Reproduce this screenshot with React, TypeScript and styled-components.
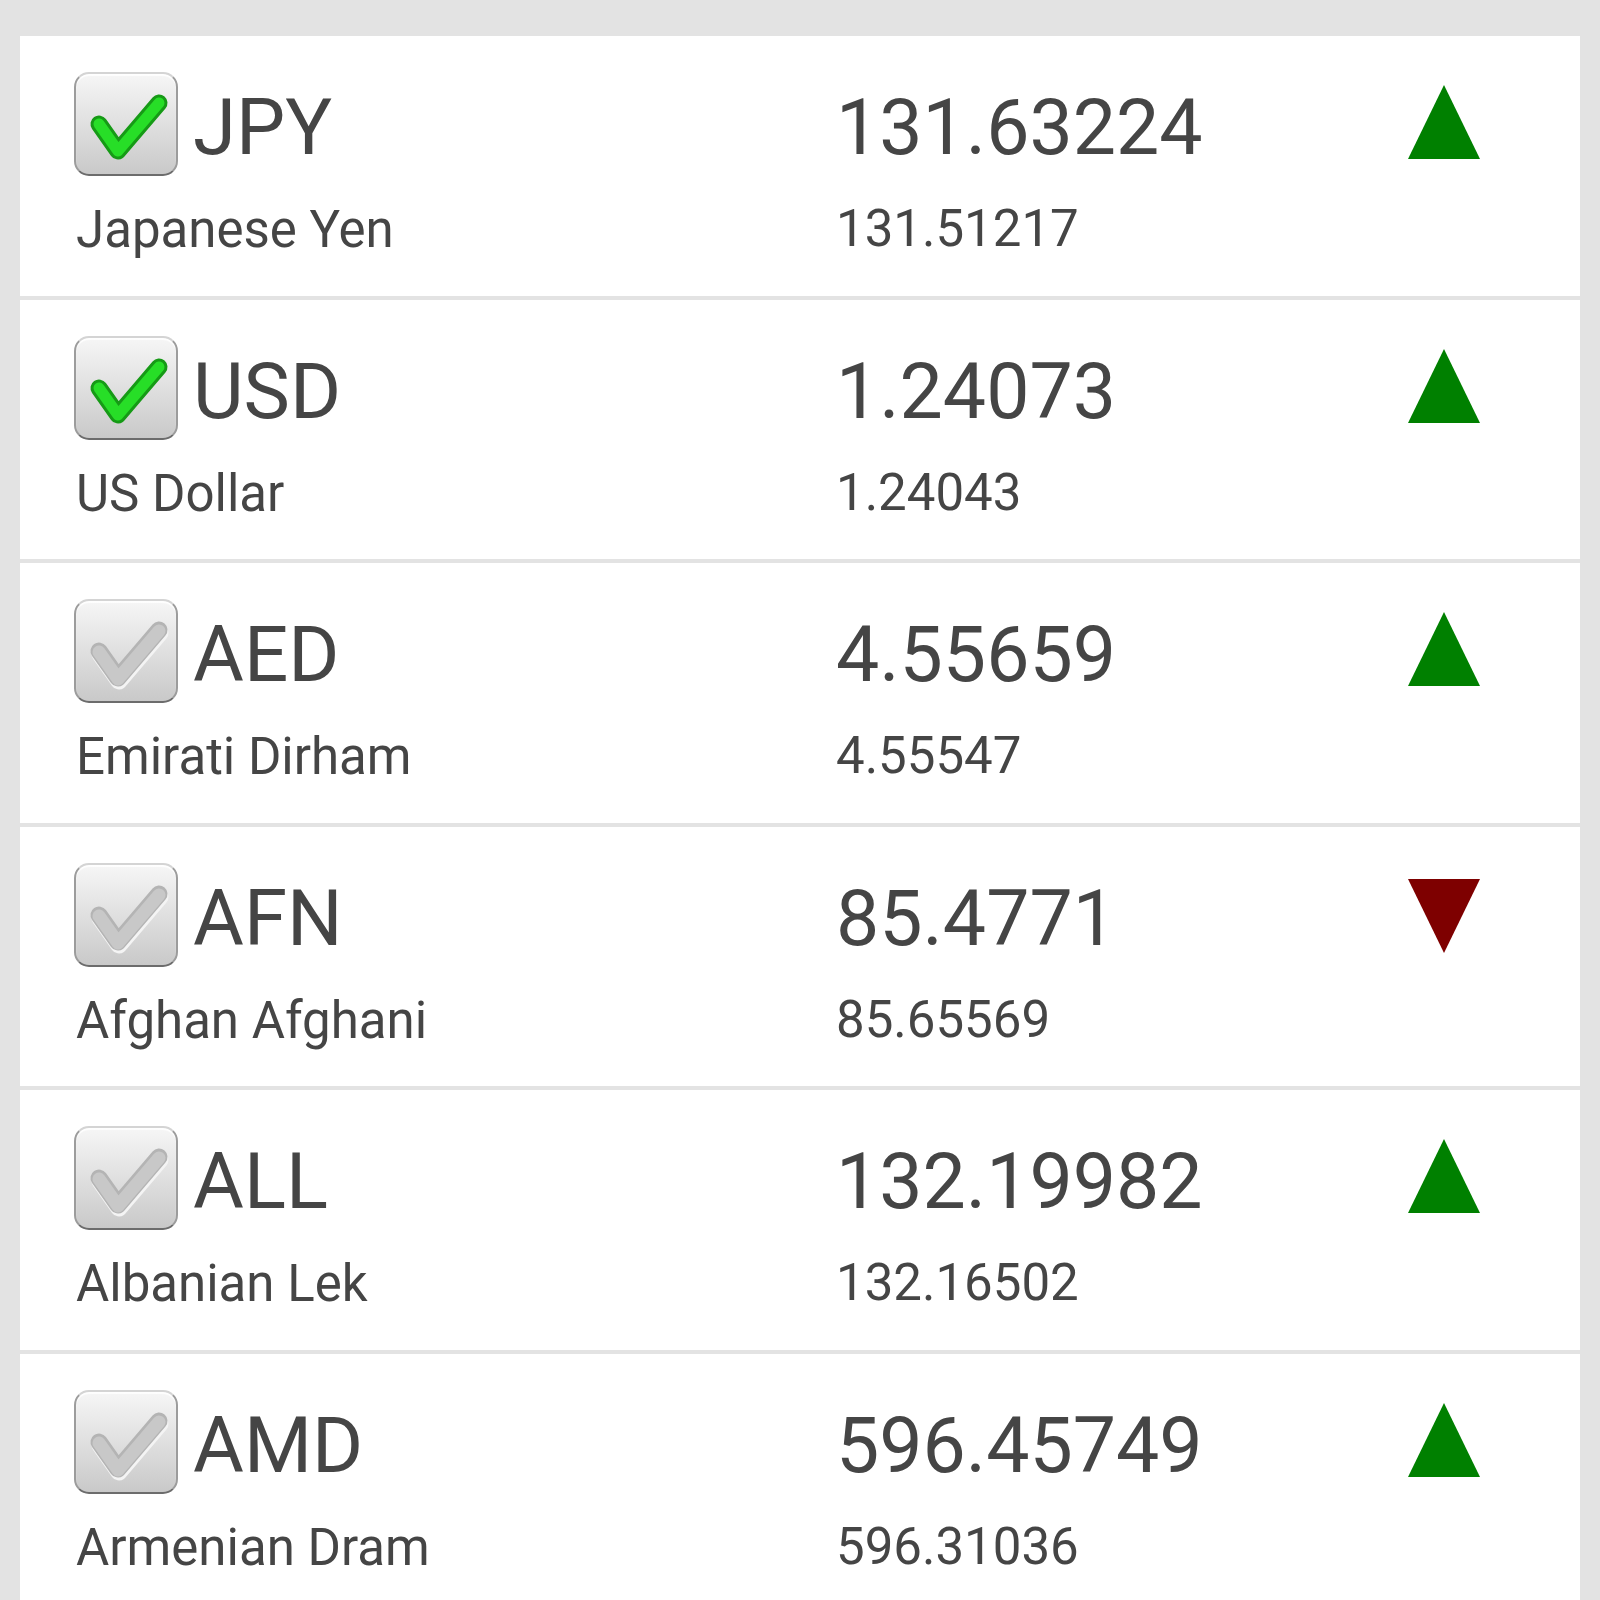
import React from 'react';
import styled, { createGlobalStyle } from 'styled-components';

const GlobalStyle = createGlobalStyle`
  html, body{
    margin: 0;
    padding: 0;
    background: #e3e3e3;
  }
  body{
    font-family: Roboto, "Noto Sans", "Liberation Sans", sans-serif;
    color: #454545;
  }
`;

const List = styled.div`
  display: flex;
  flex-direction: column;
  gap: 4px;
  padding: 36px 20px 0;
  height: 1564px;
  overflow: hidden;
`;

const Row = styled.div`
  flex: none;
  height: 259.5px;
  background: #fff;
  display: grid;
  grid-template-columns: 762px 572px 72px;
  padding-left: 54px;
`;

const Info = styled.div`
  display: flex;
  flex-direction: column;
  padding-top: 36px;
`;

const TopLine = styled.div`
  display: flex;
  align-items: center;
  height: 104px;
  gap: 15px;
`;

const Code = styled.span`
  font-size: 78px;
  line-height: 1;
  margin-top: 8px;
`;

const Name = styled.span`
  font-size: 51px;
  line-height: 1;
  margin-top: 28px;
  padding-left: 2px;
`;

const Rates = styled.div`
  display: flex;
  flex-direction: column;
  padding-top: 54px;
`;

const Rate = styled.span`
  font-size: 77px;
  line-height: 1;
`;

const PrevRate = styled.span`
  font-size: 51px;
  line-height: 1;
  margin-top: 36px;
`;

const Box = styled.div`
  flex: none;
  width: 104px;
  height: 104px;
  box-sizing: border-box;
  border-radius: 15px;
  border: 2px solid;
  border-color: #d4d4d4 #9c9c9c #6c6c6c #9c9c9c;
  background: linear-gradient(#f6f6f6, #e2e2e2 45%, #c9c9c9);
  box-shadow: inset 0 2px 1px rgba(255, 255, 255, 0.9);

  svg{
    display: block;
  }
`;

const TrendMark = styled.svg<{ $down: boolean }>`
  display: block;
  margin-top: ${p => (p.$down ? 52 : 49)}px;
`;

// tick mark: bright green when ticked, a pressed-in grey shape otherwise
function CheckBox({ checked }: { checked: boolean }) {
  const tick = 'M23 50 L42 77 L83 29';
  if (!checked) {
    return <Box>
      <svg width="100" height="100" viewBox="0 0 100 100">
        <path d={tick} fill="none" stroke="#f4f4f4" strokeWidth="17" strokeLinecap="round" strokeLinejoin="round" transform="translate(1 3)" />
        <path d={tick} fill="none" stroke="#b4b4b4" strokeWidth="17" strokeLinecap="round" strokeLinejoin="round" />
        <path d={tick} fill="none" stroke="#c8c8c8" strokeWidth="13" strokeLinecap="round" strokeLinejoin="round" transform="translate(0 1)" />
      </svg>
    </Box>;
  }
  return <Box>
    <svg width="100" height="100" viewBox="0 0 100 100">
      <path d={tick} fill="none" stroke="#169a16" strokeWidth="17" strokeLinecap="round" strokeLinejoin="round" />
      <path d={tick} fill="none" stroke="#27de27" strokeWidth="11" strokeLinecap="round" strokeLinejoin="round" />
    </svg>
  </Box>;
}

function Trend({ down }: { down: boolean }) {
  return <TrendMark $down={down} width="72" height="74" viewBox="0 0 72 74">
    {down
      ? <polygon points="0,0 72,0 36,74" fill="#7e0000" />
      : <polygon points="36,0 72,74 0,74" fill="#008000" />}
  </TrendMark>;
}

const currencies = [
  { code: 'JPY', name: 'Japanese Yen', rate: '131.63224', prev: '131.51217', down: false, checked: true },
  { code: 'USD', name: 'US Dollar', rate: '1.24073', prev: '1.24043', down: false, checked: true },
  { code: 'AED', name: 'Emirati Dirham', rate: '4.55659', prev: '4.55547', down: false, checked: false },
  { code: 'AFN', name: 'Afghan Afghani', rate: '85.4771', prev: '85.65569', down: true, checked: false },
  { code: 'ALL', name: 'Albanian Lek', rate: '132.19982', prev: '132.16502', down: false, checked: false },
  { code: 'AMD', name: 'Armenian Dram', rate: '596.45749', prev: '596.31036', down: false, checked: false },
];

export default function App() {
  return <>
    <GlobalStyle />
    <List>
      {currencies.map(c => (
        <Row key={c.code}>
          <Info>
            <TopLine>
              <CheckBox checked={c.checked} />
              <Code>{c.code}</Code>
            </TopLine>
            <Name>{c.name}</Name>
          </Info>
          <Rates>
            <Rate>{c.rate}</Rate>
            <PrevRate>{c.prev}</PrevRate>
          </Rates>
          <Trend down={c.down} />
        </Row>
      ))}
    </List>
  </>;
}
